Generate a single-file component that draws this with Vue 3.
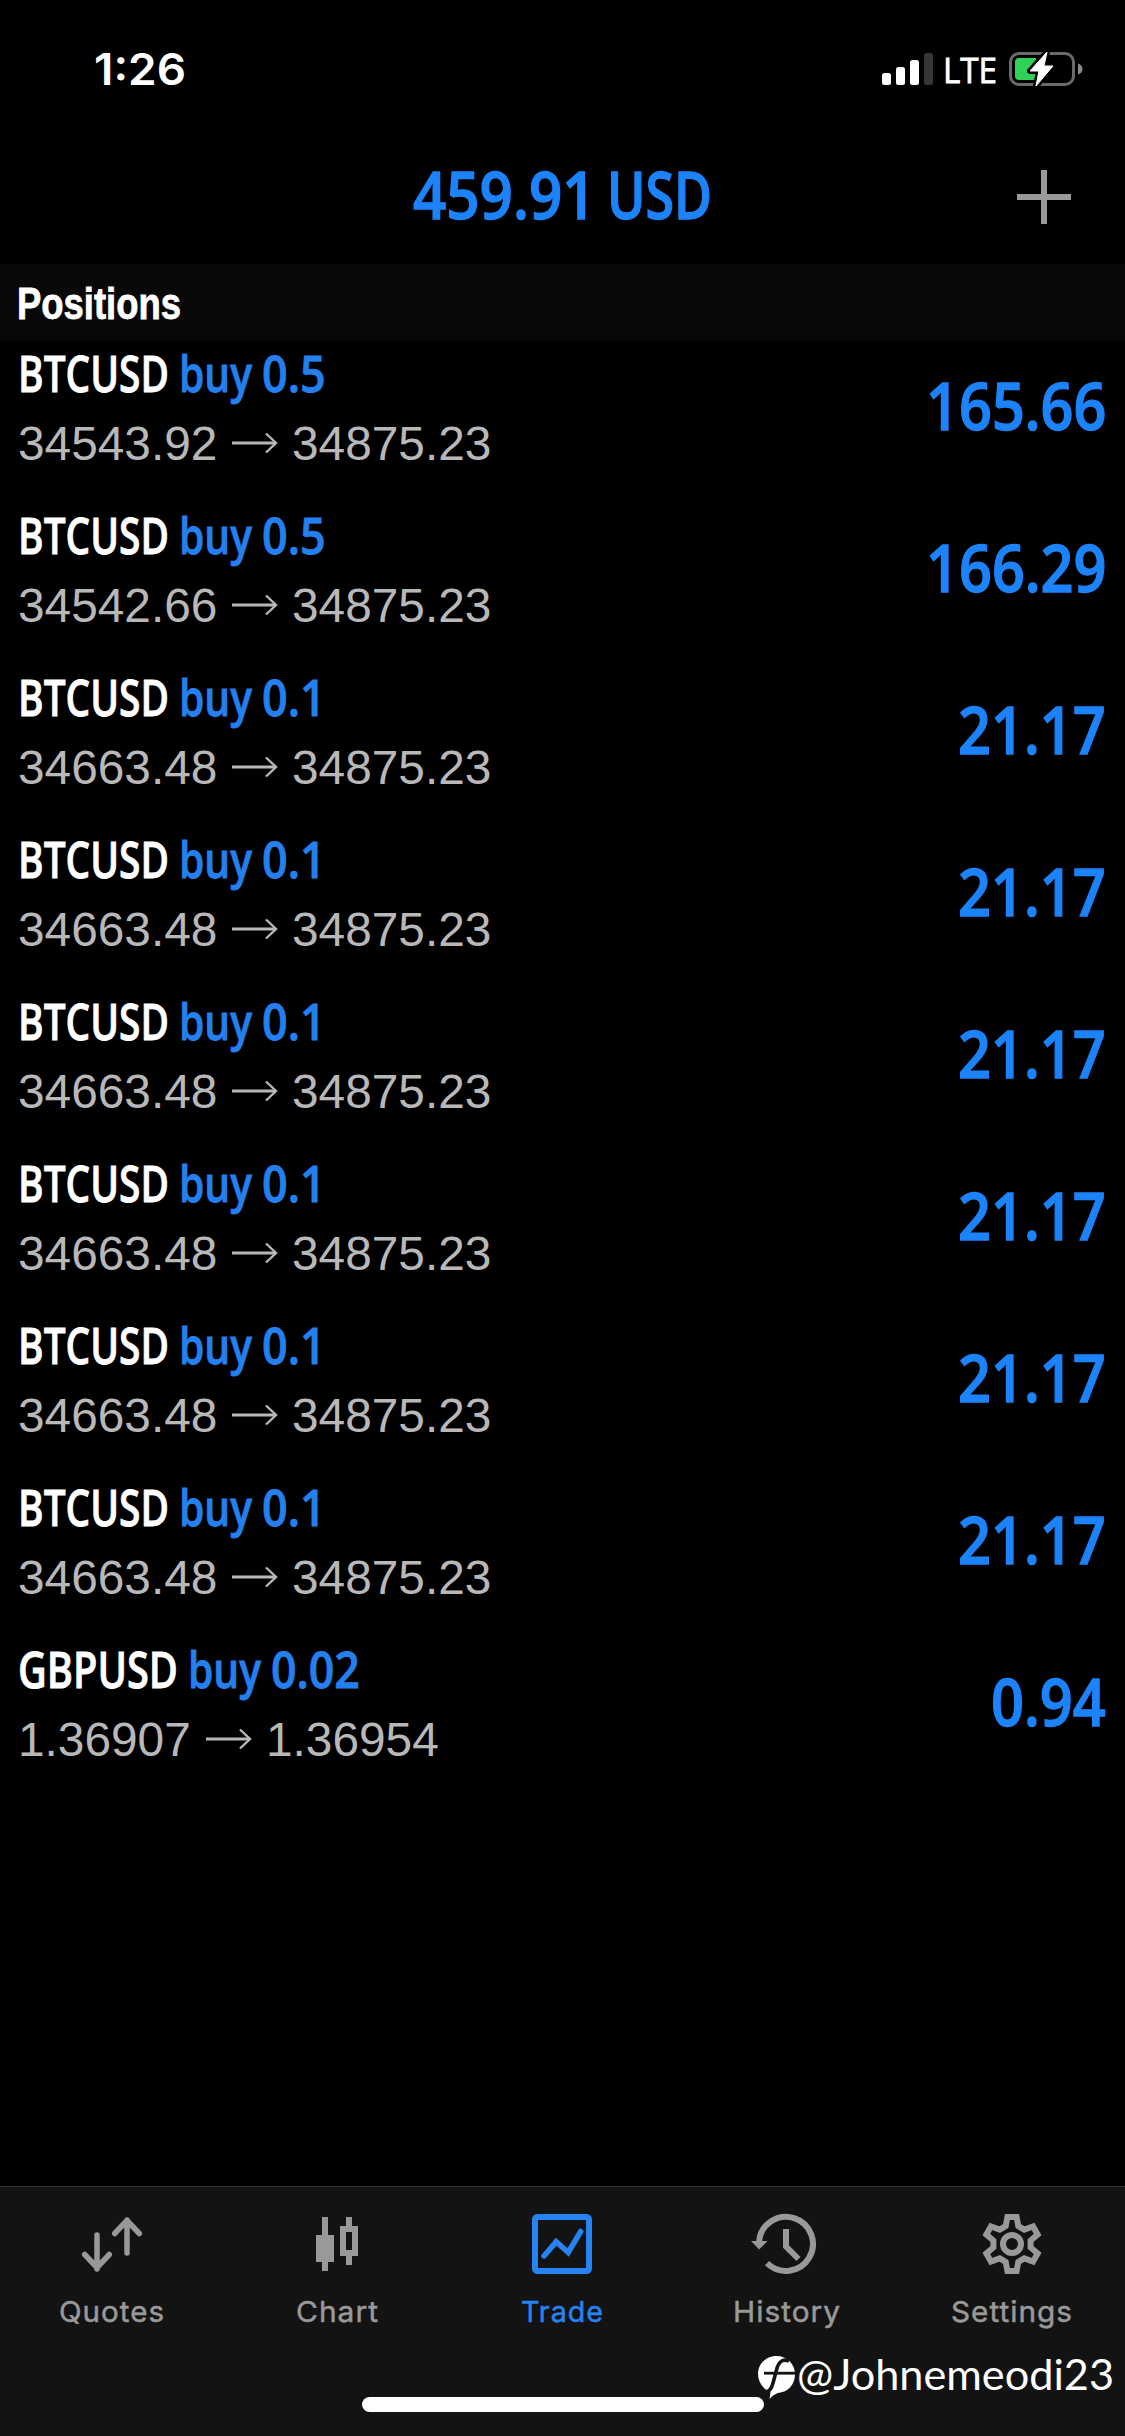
<script setup>
import { h } from 'vue'

// One line of text fitted to a given advance width.
const FitText = {
  props: { text: String, width: Number, height: Number, baseline: Number },
  setup(props) {
    return () =>
      h('svg', { width: props.width, height: props.height, overflow: 'visible' }, [
        h(
          'text',
          {
            x: 0,
            y: props.baseline,
            fill: 'currentColor',
            textLength: props.width,
            lengthAdjust: 'spacingAndGlyphs'
          },
          props.text
        )
      ])
  }
}

const digitsWidth = (text, digit, dot) =>
  [...text].reduce((sum, c) => sum + (c === '.' ? dot : digit), 0)

const btc = (volume, open, profit) => ({
  symbol: 'BTCUSD', symbolWidth: 151, volume, open, current: '34875.23', profit
})

const positions = [
  btc('0.5', '34543.92', '165.66'),
  btc('0.5', '34542.66', '166.29'),
  ...Array.from({ length: 6 }, () => btc('0.1', '34663.48', '21.17')),
  {
    symbol: 'GBPUSD', symbolWidth: 160, volume: '0.02',
    open: '1.36907', current: '1.36954', profit: '0.94'
  }
]

const tabs = [
  { name: 'Quotes', width: 106 },
  { name: 'Chart', width: 83 },
  { name: 'Trade', width: 83 },
  { name: 'History', width: 108 },
  { name: 'Settings', width: 122 }
]

const gear = Array.from({ length: 6 }, (_, i) => {
  const a = (i * Math.PI) / 3
  return [[-6.3, -17.8], [-4.6, -27], [4.6, -27], [6.3, -17.8]]
    .map(([x, y]) =>
      `${(x * Math.cos(a) - y * Math.sin(a)).toFixed(2)},${(x * Math.sin(a) + y * Math.cos(a)).toFixed(2)}`)
    .join(' ')
}).join(' ')
</script>

<template>
  <div class="screen">
    <div class="status">
      <FitText class="time" text="1:26" :width="92" :height="132" :baseline="85" />
      <div class="indicators">
        <svg class="signal" width="51" height="32" viewBox="0 0 51 32" fill="#fff">
          <rect x="0" y="20" width="9" height="12" rx="2.5" />
          <rect x="14" y="14" width="9" height="18" rx="2.5" />
          <rect x="28" y="7" width="9" height="25" rx="2.5" />
          <rect x="42" y="0" width="9" height="32" rx="2.5" fill="#363636" />
        </svg>
        <FitText class="network" text="LTE" :width="54" :height="132" :baseline="83" />
        <svg class="battery" width="74" height="40" viewBox="0 0 74 40">
          <rect x="1.5" y="4.5" width="63" height="31" rx="8.5" fill="none" stroke="#6c686b" stroke-width="3" />
          <path d="M69 14.500Q73.500 16 73.500 20T69 25.500Z" fill="#8c8c8c" />
          <path d="M10 9H27V31H10Q6 31 6 27V13Q6 9 10 9Z" fill="#30d158" />
          <path d="M38 3L21 22H30L27 37L44 17H35Z" fill="#fff" stroke="#000" stroke-width="6" stroke-linejoin="round" />
          <path d="M38 3L21 22H30L27 37L44 17H35Z" fill="#fff" stroke="#fff" stroke-width="1" stroke-linejoin="round" />
        </svg>
      </div>
    </div>

    <header class="header">
      <div class="balance">
        <FitText text="459.91" :width="182.500" :height="132" :baseline="87" />
        <FitText text="USD" :width="105" :height="132" :baseline="87" />
      </div>
      <svg class="add" width="54" height="54" viewBox="0 0 54 54" fill="#999">
        <rect x="24" width="6" height="54" />
        <rect y="24" width="54" height="6" />
      </svg>
    </header>

    <div class="section">
      <FitText class="section-title" text="Positions" :width="164" :height="77" :baseline="55" />
    </div>

    <ul class="positions">
      <li v-for="(p, i) in positions" :key="i" class="position">
        <div class="details">
          <div class="name">
            <FitText class="symbol" :text="p.symbol" :width="p.symbolWidth" :height="70" :baseline="51" />
            <FitText class="side" text="buy" :width="73" :height="70" :baseline="51" />
            <FitText class="side" :text="p.volume" :width="digitsWidth(p.volume, 25.3, 13)" :height="70" :baseline="51" />
          </div>
          <div class="prices">
            <FitText :text="p.open" :width="digitsWidth(p.open, 26.6, 13.2)" :height="92" :baseline="49" />
            <svg class="arrow" width="46" height="20" viewBox="0 0 46 20" fill="none" stroke="#b8b8b8" stroke-width="3">
              <path d="M0 10H44" />
              <path d="M34 0.500L44 10L34 19.500" stroke-width="2.400" />
            </svg>
            <FitText :text="p.current" :width="digitsWidth(p.current, 26.6, 13.2)" :height="92" :baseline="49" />
          </div>
        </div>
        <FitText class="profit" :text="p.profit" :width="digitsWidth(p.profit, 32.9, 16)" :height="162" :baseline="89" />
      </li>
    </ul>

    <nav class="tabbar">
      <div class="tabs">
        <div v-for="tab in tabs" :key="tab.name" class="tab" :class="{ active: tab.name === 'Trade' }">
          <svg class="icon" width="72" height="60" viewBox="-36 -30 72 60" fill="none" stroke="currentColor" stroke-width="6">
            <g v-if="tab.name === 'Quotes'" stroke-linecap="round" stroke-linejoin="round" stroke-width="5.500">
              <path d="M-15 -9V25M-27.300 10.500L-15 23.500L-2.700 10.500" />
              <path d="M15 9V-24M2.700 -10.500L15 -23.500L27.300 -10.500" />
            </g>
            <g v-else-if="tab.name === 'Chart'" fill="currentColor" stroke="none">
              <path d="M-15 -27H-9V-9H-3V18H-9V27H-15V18H-21V-9H-15Z" />
              <path fill-rule="evenodd" d="M9 -27H15V-18H21V12H15V21H9V12H3V-18H9ZM9 -12V6H15V-12Z" />
            </g>
            <g v-else-if="tab.name === 'Trade'">
              <rect x="-27" y="-27" width="54" height="54" rx="2.500" />
              <path d="M-18 12L-5.800 -2.300L6.200 8.500L18.700 -12.500" stroke-width="5.500" stroke-linecap="round" />
            </g>
            <g v-else-if="tab.name === 'History'">
              <path d="M-28 -2A27 27 0 1 1 -20 19.200" />
              <path d="M-1 -15V2.500L11.500 15" />
              <path d="M-36 -3H-19.500L-27.800 5.500Z" fill="currentColor" stroke="none" />
            </g>
            <g v-else>
              <polygon :points="gear" />
              <circle r="9" />
            </g>
          </svg>
          <FitText class="label" :text="tab.name" :width="tab.width" :height="60" :baseline="48" />
        </div>
      </div>
      <div class="home"></div>
    </nav>

    <div class="watermark">
      <svg class="mark" width="38" height="44" viewBox="0 0 38 44">
        <path d="M18.500 0C29 0 37 8 37 18C37 29 30 36 20 37C17 38 14 40 11.500 43L12.500 36C5 33 0 26 0 18C0 8 8 0 18.500 0Z" fill="#fff" />
        <path d="M31 5C24 2 20 7 18.500 14L15 27C13.500 33 11 36 7 36" fill="none" stroke="#131313" stroke-width="3.600" />
        <path d="M6 17.200H37" stroke="#131313" stroke-width="2.800" />
      </svg>
      <FitText class="handle" text="@Johnemeodi23" :width="317" :height="44" :baseline="34" />
    </div>
  </div>
</template>

<style>
body {
  background: #000;
}
</style>

<style scoped>
.screen {
  position: relative;
  display: flex;
  flex-direction: column;
  width: 1125px;
  height: 2436px;
  overflow: hidden;
  background: #000;
  color: #fff;
  font-family: "Open Sans", "Noto Sans", sans-serif;
}
svg {
  display: block;
  flex: none;
  overflow: visible;
}
.status {
  display: flex;
  justify-content: space-between;
  height: 132px;
  padding: 0 42px 0 94px;
}
.time {
  font: 600 44px Inter, sans-serif;
}
.indicators {
  display: flex;
}
.signal {
  margin: 53px 10px 0 0;
}
.network {
  margin-right: 12px;
  font: 400 35px "Open Sans", sans-serif;
  stroke: currentColor;
  stroke-width: 0.8px;
}
.battery {
  margin-top: 49px;
}
.header {
  display: grid;
  grid-template-columns: 1fr auto 1fr;
  height: 132px;
  padding-right: 54px;
  padding-left: 54px;
}
.balance {
  display: flex;
  grid-column: 2;
  gap: 11px;
  color: #1c83fb;
  font-size: 65px;
  font-weight: 600;
  stroke: currentColor;
  stroke-width: 1.3px;
}
.add {
  justify-self: end;
  margin-top: 38px;
}
.section {
  height: 77px;
  padding-left: 17px;
  background: #080808;
}
.section-title {
  font: 700 45px "Liberation Sans", sans-serif;
  stroke: currentColor;
  stroke-width: 0.8px;
}
.positions {
  flex: 1;
  margin: 0;
  padding: 0;
  list-style: none;
}
.position {
  display: flex;
  justify-content: space-between;
  height: 162px;
  padding: 0 19px 0 18px;
}
.name {
  display: flex;
  gap: 10px;
  font-size: 50px;
  font-weight: 600;
  stroke: currentColor;
  stroke-width: 0.8px;
}
.side {
  color: #2480ee;
  stroke: currentColor;
}
.prices {
  display: flex;
  color: #b8b8b8;
  font: 47.4px "Liberation Sans", sans-serif;
}
.arrow {
  margin: 22px 14px 0 15px;
}
.profit {
  color: #1c83fb;
  font-size: 65px;
  font-weight: 600;
  stroke: currentColor;
  stroke-width: 1.3px;
}
.tabbar {
  display: flex;
  flex-direction: column;
  align-items: center;
  box-sizing: border-box;
  height: 250px;
  border-top: 1px solid #343434;
  background: #131313;
}
.tabs {
  display: flex;
  width: 100%;
  height: 210px;
}
.tab {
  display: flex;
  flex-direction: column;
  align-items: center;
  width: 225px;
  padding-top: 27px;
  color: #999;
}
.tab.active {
  color: #2583f2;
}
.icon {
  margin-right: 1px;
}
.label {
  margin-right: 1px;
  font: 400 29px Inter, sans-serif;
  letter-spacing: 1px;
  stroke: currentColor;
  stroke-width: 0.5px;
}
.home {
  width: 402px;
  height: 15px;
  border-radius: 8px;
  background: #fff;
}
.watermark {
  position: absolute;
  top: 2356px;
  left: 758px;
  display: flex;
  gap: 1px;
}
.handle {
  font: 400 43px Lato, sans-serif;
}
</style>
